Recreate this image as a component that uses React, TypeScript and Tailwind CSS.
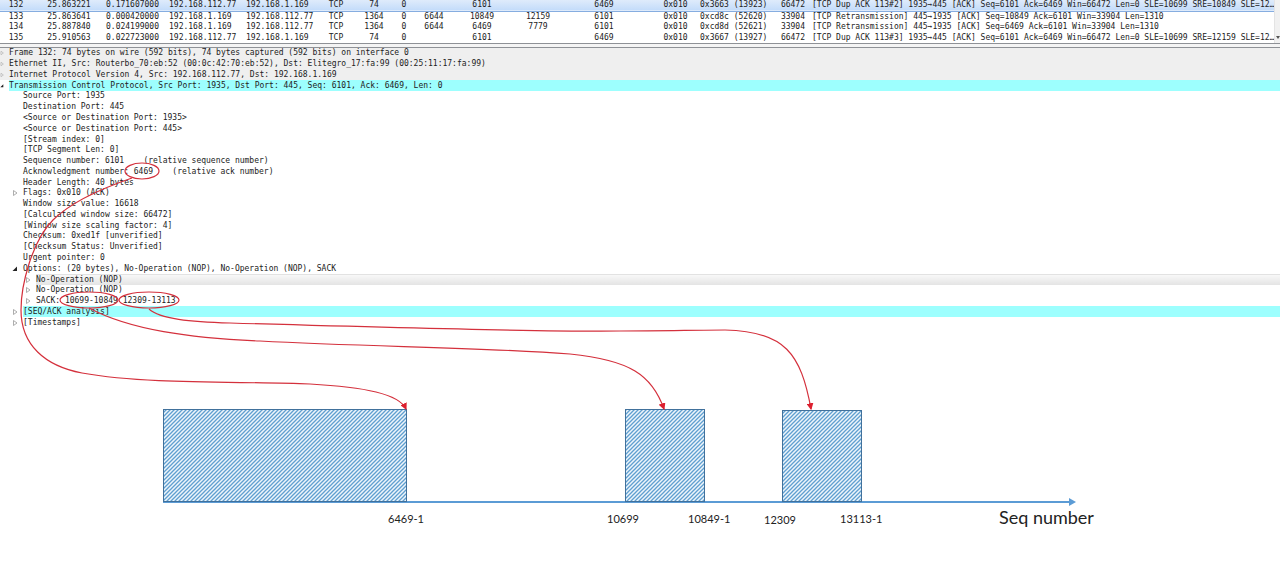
import clsx from 'clsx';

interface Packet {
    no: string;
    time: string;
    delta: string;
    source: string;
    destination: string;
    length: string;
    tcpLen: string;
    seq: string;
    nextSeq: string;
    ack: string;
    id: string;
    win: string;
    info: string;
}

interface TreeLine {
    text: string;
    depth: number;
    marker?: 'open' | 'closed';
    tone?: 'gray' | 'cyan' | 'selected';
}

const packets: Packet[] = [
    { no: '132', time: '25.863221', delta: '0.171607000', source: '192.168.112.77', destination: '192.168.1.169', length: '74', tcpLen: '', seq: '6101', nextSeq: '', ack: '6469', id: '0x3663 (13923)', win: '66472', info: '[TCP Dup ACK 113#2] 1935→445 [ACK] Seq=6101 Ack=6469 Win=66472 Len=0 SLE=10699 SRE=10849 SLE=12…' },
    { no: '133', time: '25.863641', delta: '0.000420000', source: '192.168.1.169', destination: '192.168.112.77', length: '1364', tcpLen: '6644', seq: '10849', nextSeq: '12159', ack: '6101', id: '0xcd8c (52620)', win: '33904', info: '[TCP Retransmission] 445→1935 [ACK] Seq=10849 Ack=6101 Win=33904 Len=1310' },
    { no: '134', time: '25.887840', delta: '0.024199000', source: '192.168.1.169', destination: '192.168.112.77', length: '1364', tcpLen: '6644', seq: '6469', nextSeq: '7779', ack: '6101', id: '0xcd8d (52621)', win: '33904', info: '[TCP Retransmission] 445→1935 [ACK] Seq=6469 Ack=6101 Win=33904 Len=1310' },
    { no: '135', time: '25.910563', delta: '0.022723000', source: '192.168.112.77', destination: '192.168.1.169', length: '74', tcpLen: '', seq: '6101', nextSeq: '', ack: '6469', id: '0x3667 (13927)', win: '66472', info: '[TCP Dup ACK 113#3] 1935→445 [ACK] Seq=6101 Ack=6469 Win=66472 Len=0 SLE=10699 SRE=12159 SLE=12…' },
];

const treeLines: TreeLine[] = [
    { text: 'Frame 132: 74 bytes on wire (592 bits), 74 bytes captured (592 bits) on interface 0', depth: 0, marker: 'closed', tone: 'gray' },
    { text: 'Ethernet II, Src: Routerbo_70:eb:52 (00:0c:42:70:eb:52), Dst: Elitegro_17:fa:99 (00:25:11:17:fa:99)', depth: 0, marker: 'closed', tone: 'gray' },
    { text: 'Internet Protocol Version 4, Src: 192.168.112.77, Dst: 192.168.1.169', depth: 0, marker: 'closed', tone: 'gray' },
    { text: 'Transmission Control Protocol, Src Port: 1935, Dst Port: 445, Seq: 6101, Ack: 6469, Len: 0', depth: 0, marker: 'open', tone: 'cyan' },
    { text: 'Source Port: 1935', depth: 1 },
    { text: 'Destination Port: 445', depth: 1 },
    { text: '<Source or Destination Port: 1935>', depth: 1 },
    { text: '<Source or Destination Port: 445>', depth: 1 },
    { text: '[Stream index: 0]', depth: 1 },
    { text: '[TCP Segment Len: 0]', depth: 1 },
    { text: 'Sequence number: 6101    (relative sequence number)', depth: 1 },
    { text: 'Acknowledgment number: 6469    (relative ack number)', depth: 1 },
    { text: 'Header Length: 40 bytes', depth: 1 },
    { text: 'Flags: 0x010 (ACK)', depth: 1, marker: 'closed' },
    { text: 'Window size value: 16618', depth: 1 },
    { text: '[Calculated window size: 66472]', depth: 1 },
    { text: '[Window size scaling factor: 4]', depth: 1 },
    { text: 'Checksum: 0xed1f [unverified]', depth: 1 },
    { text: '[Checksum Status: Unverified]', depth: 1 },
    { text: 'Urgent pointer: 0', depth: 1 },
    { text: 'Options: (20 bytes), No-Operation (NOP), No-Operation (NOP), SACK', depth: 1, marker: 'open' },
    { text: 'No-Operation (NOP)', depth: 2, marker: 'closed', tone: 'selected' },
    { text: 'No-Operation (NOP)', depth: 2, marker: 'closed' },
    { text: 'SACK: 10699-10849 12309-13113', depth: 2, marker: 'closed' },
    { text: '[SEQ/ACK analysis]', depth: 1, marker: 'closed', tone: 'cyan' },
    { text: '[Timestamps]', depth: 1, marker: 'closed' },
];

const indents = ['w-[9px]', 'w-[23px]', 'w-[36px]'];

const tones = {
    gray: 'bg-[#efefef]',
    cyan: 'bg-[#9dfffe]',
    selected: 'bg-linear-to-b from-[#f8f8f8] to-[#e4e4e4] border-t border-[#e2e2e2]',
};

const columns = [
    'w-8', 'w-[74px]', 'w-[52px]', 'w-[87px]', 'w-[76px]', 'w-[30px]', 'w-[46px]', 'w-[14px]',
    'w-[46px]', 'w-[50px]', 'w-[62px]', 'w-[70px]', 'w-[61px]', 'w-[78px]', 'w-[34px]',
];

function PacketList() {
    return (
        <div className="flex border-b border-[#8e9196] bg-white">
            <div className="min-w-0 flex-1">
                <table className="h-[43px] w-full table-fixed border-collapse text-center">
                    <colgroup>
                        {columns.map((width, i) => (
                            <col key={i} className={width} />
                        ))}
                        <col />
                    </colgroup>
                    <tbody>
                        {packets.map((p, i) => (
                            <tr
                                key={p.no}
                                className={i === 0 ? 'bg-linear-to-b from-[#dfebfb] to-[#c4dcfa] border-b border-[#86ade0]' : ''}
                            >
                                <td>{p.no}</td>
                                <td>{p.time}</td>
                                <td>{p.delta}</td>
                                <td className="pl-[11px] text-left">{p.source}</td>
                                <td className="pl-px text-left">{p.destination}</td>
                                <td>TCP</td>
                                <td>{p.length}</td>
                                <td>0</td>
                                <td>{p.tcpLen}</td>
                                <td>{p.seq}</td>
                                <td>{p.nextSeq}</td>
                                <td>{p.ack}</td>
                                <td className="pl-3">0x010</td>
                                <td className="text-left">{p.id}</td>
                                <td className="pr-[7px] text-right">{p.win}</td>
                                <td className="text-left">{p.info}</td>
                            </tr>
                        ))}
                    </tbody>
                </table>
            </div>
            {/* Scrollbar track */}
            <div className="flex w-[6px] items-end justify-end border-l border-[#e4e4e4] bg-[#f1f1f1] pb-1">
                <svg viewBox="0 0 4 3" className="h-[3px] w-1">
                    <path d="M0 0H4L2 3Z" fill="#555" />
                </svg>
            </div>
        </div>
    );
}

function Marker({ type }: { type: 'open' | 'closed' }) {
    return (
        <svg viewBox="0 0 6 6" className="size-[6px]">
            {type === 'open' ? (
                <path d="M5 .5V5H.5Z" fill="#222" />
            ) : (
                <path d="M1.5 .5 5 3 1.5 5.5Z" fill="#fff" stroke="#999" strokeWidth=".8" />
            )}
        </svg>
    );
}

function PacketDetails() {
    return (
        <div className="grid h-[280px] auto-rows-fr">
            {treeLines.map((line, i) => (
                <div key={i} className="flex min-h-0 items-stretch">
                    <span className={clsx('flex shrink-0 items-center justify-end pr-[5px]', indents[line.depth], line.tone === 'gray' && 'bg-[#efefef]')}>
                        {line.marker && <Marker type={line.marker} />}
                    </span>
                    <span className={clsx('flex flex-1 items-center', line.tone && tones[line.tone])}>{line.text}</span>
                </div>
            ))}
        </div>
    );
}

function SequenceDiagram() {
    return (
        <svg viewBox="0 0 1280 575" className="pointer-events-none absolute top-0 left-0 h-[575px] w-[1280px]">
            <defs>
                <pattern id="hatch" width="4" height="4" patternUnits="userSpaceOnUse">
                    <rect width="4" height="4" fill="#eef5fb" />
                    <path d="M-1 1 1-1M0 4 4 0M3 5 5 3" stroke="#5f9fd0" strokeWidth="1.3" />
                </pattern>
                <marker id="tip" viewBox="0 0 6 6" refX="5" refY="3" markerWidth="7" markerHeight="7" markerUnits="userSpaceOnUse" orient="auto">
                    <path d="M0 0 6 3 0 6Z" fill="#dc1f2e" />
                </marker>
            </defs>

            {/* Axis */}
            <path d="M163 502H1070" stroke="#5b9bd5" strokeWidth="2" />
            <path d="M1069 498 1076 502 1069 506Z" fill="#5b9bd5" />

            {/* Received ranges */}
            <g fill="url(#hatch)" stroke="#41719c">
                <rect x="163.5" y="409.5" width="243" height="92" />
                <rect x="625.5" y="409.5" width="79" height="92" />
                <rect x="782.5" y="410.5" width="79" height="91" />
            </g>

            <g className="fill-[#222] font-[Lato,sans-serif] text-[11px]">
                <text x="388" y="523">6469-1</text>
                <text x="607" y="523">10699</text>
                <text x="688" y="523">10849-1</text>
                <text x="764" y="524">12309</text>
                <text x="840" y="523">13113-1</text>
                <text x="999" y="524" className="text-[18px]">Seq number</text>
            </g>

            {/* Callouts */}
            <g fill="none" stroke="#d4303c" strokeWidth="1.2">
                <ellipse cx="142" cy="171" rx="17" ry="8" />
                <ellipse cx="89" cy="300" rx="29" ry="8" />
                <ellipse cx="149" cy="300" rx="30" ry="8" />
                <path d="M132 178C100 189 70 203 53 220C32 241 21 285 21 310C21 345 45 366 82 373C150 385 240 381 310 384C365 387 399 394 406 409" markerEnd="url(#tip)" />
                <path d="M89 308C130 330 190 338 260 341C370 347 480 347 570 354C630 360 652 375 664 409" markerEnd="url(#tip)" />
                <path d="M149 309C160 319 190 322 230 323C400 328 540 332 620 331C660 331 700 330 725 330C785 331 801 354 811 409" markerEnd="url(#tip)" />
            </g>
        </svg>
    );
}

export default function App() {
    return (
        <main className="relative min-h-screen overflow-hidden bg-white font-['DejaVu_Sans_Mono',monospace] text-[8px] leading-[10px] whitespace-pre text-[#222]">
            <PacketList />
            <div className="h-1 border-b border-[#8e9196] bg-[#f4f4f4]" />
            <PacketDetails />
            <SequenceDiagram />
        </main>
    );
}
